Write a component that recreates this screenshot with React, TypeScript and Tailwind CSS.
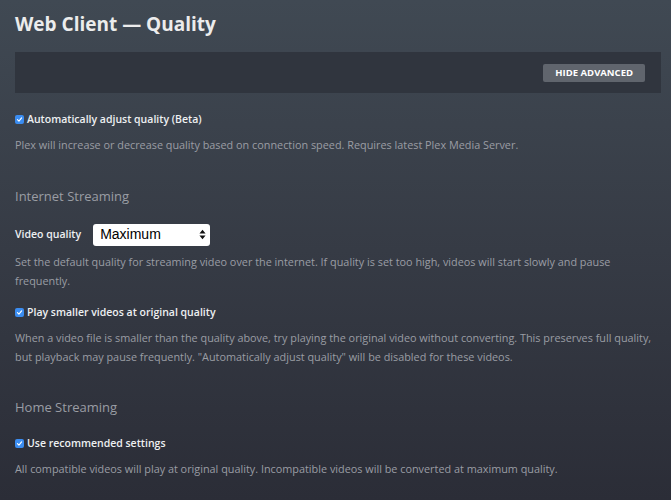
function Check({ label }: { label: string }) {
  return (
    <label className="flex items-center gap-[3px] text-[10.5px] font-semibold text-[#eef0f2]">
      <span className="flex h-[9px] w-[9px] items-center justify-center rounded-[2px] bg-[#3b8df1]">
        <svg viewBox="0 0 10 10" className="h-[7px] w-[7px]">
          <path d="M2 5.2 L4.2 7.4 L8 2.6" fill="none" stroke="white" strokeWidth="1.6" strokeLinecap="round" strokeLinejoin="round" />
        </svg>
      </span>
      {label}
    </label>
  );
}

function Help({ children }: { children: React.ReactNode }) {
  return <p className="text-[10.85px] leading-[19px] text-[#9a9da4]">{children}</p>;
}

export default function App() {
  return (
    <div
      className="h-[500px] w-[671px] overflow-hidden bg-gradient-to-b from-[#404953] via-[#363b45] to-[#2b2d37] pl-[15px] pr-[10px] pt-[9px]"
      style={{ fontFamily: '"Open Sans", sans-serif' }}
    >
      <h1 className="text-[19px] font-bold leading-[30px] text-[#ececec]">Web Client — Quality</h1>

      <div className="mt-[13px] flex h-[41px] items-center justify-end bg-[#30353e] pr-[16px]">
        <button className="h-[18px] rounded-[2px] bg-[#60656d] px-[12px] text-[9.5px] font-bold leading-[18px] text-white">
          HIDE ADVANCED
        </button>
      </div>

      <div className="mt-[19px]">
        <Check label="Automatically adjust quality (Beta)" />
      </div>
      <div className="mt-[7px]">
        <Help>Plex will increase or decrease quality based on connection speed. Requires latest Plex Media Server.</Help>
      </div>

      <h2 className="mt-[32px] text-[13px] leading-[20px] text-[#9a9da4]">Internet Streaming</h2>

      <div className="mt-[18px] flex items-center gap-[12px]">
        <span className="text-[10.5px] font-semibold text-[#eef0f2]">Video quality</span>
        <div
          className="flex h-[22px] w-[117px] items-center justify-between rounded-[3px] bg-white pl-[7px] pr-[4px] text-[14px] text-black"
          style={{ fontFamily: '"Liberation Sans", sans-serif' }}
        >
          Maximum
          <svg viewBox="0 0 8 12" className="h-[11px] w-[7px]">
            <path d="M4 0.5 L7.5 4.8 L0.5 4.8 Z M4 11.5 L7.5 7.2 L0.5 7.2 Z" fill="#111" />
          </svg>
        </div>
      </div>
      <div className="mt-[6px]">
        <Help>
          Set the default quality for streaming video over the internet. If quality is set too high, videos will start slowly and pause frequently.
        </Help>
      </div>

      <div className="mt-[15px]">
        <Check label="Play smaller videos at original quality" />
      </div>
      <div className="mt-[7px]">
        <Help>
          When a video file is smaller than the quality above, try playing the original video without converting. This preserves full quality, but playback may pause frequently. "Automatically adjust quality" will be disabled for these videos.
        </Help>
      </div>

      <h2 className="mt-[31px] text-[13px] leading-[20px] text-[#9a9da4]">Home Streaming</h2>

      <div className="mt-[19px]">
        <Check label="Use recommended settings" />
      </div>
      <div className="mt-[8px]">
        <Help>All compatible videos will play at original quality. Incompatible videos will be converted at maximum quality.</Help>
      </div>
    </div>
  );
}
